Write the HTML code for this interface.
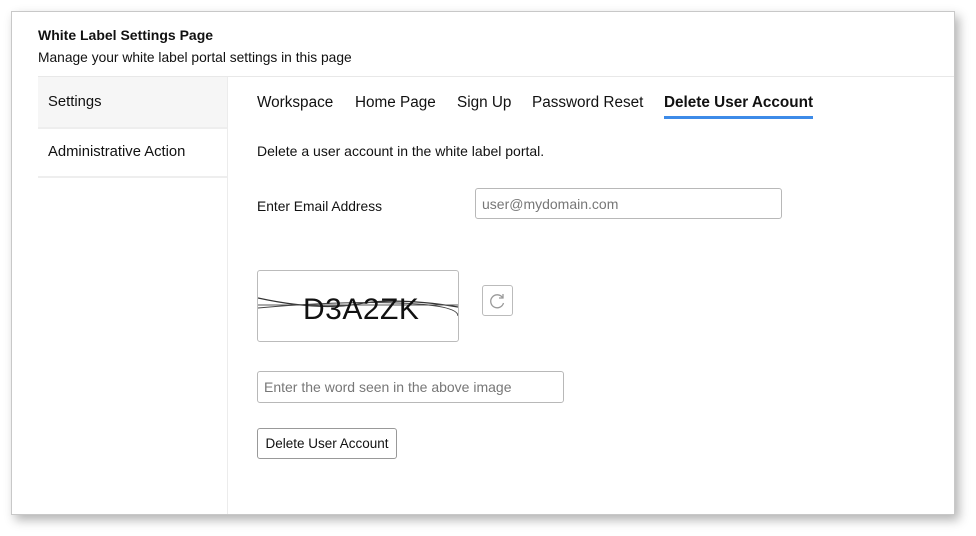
<!DOCTYPE html>
<html><head><style>
body{margin:0;width:976px;height:536px;background:#fff;font-family:"Liberation Sans",sans-serif;position:relative;overflow:hidden;color:#111}
.card{position:absolute;left:11px;top:11px;width:942px;height:502px;background:#fff;border:1px solid #c8c8c8;box-shadow:4px 5px 10px rgba(0,0,0,.3)}
.a{position:absolute;white-space:nowrap}
.in{position:absolute;border:1px solid #b8b8b8;border-radius:3px;background:#fff;font-size:14px;color:#777;box-sizing:border-box;padding-left:6px;display:flex;align-items:center}
</style></head><body>
<div class="card"></div>
<div class="a" style="left:38px;top:27px;font-size:14px;font-weight:bold">White Label Settings Page</div>
<div class="a" style="left:38px;top:50px;font-size:13.8px">Manage your white label portal settings in this page</div>
<div class="a" style="left:38px;top:76px;width:916px;height:1px;background:#e8e8e8"></div>
<div class="a" style="left:38px;top:77px;width:189px;height:50px;background:#f6f6f6"></div>
<div class="a" style="left:38px;top:127px;width:189px;height:2px;background:#eee"></div>
<div class="a" style="left:38px;top:176px;width:189px;height:2px;background:#eee"></div>
<div class="a" style="left:227px;top:77px;width:1px;height:437px;background:#ececec"></div>
<div class="a" style="left:48px;top:94px;font-size:14.8px">Settings</div>
<div class="a" style="left:48px;top:144px;font-size:14.8px">Administrative Action</div>
<div class="a" style="left:257px;top:94px;font-size:15.3px">Workspace</div>
<div class="a" style="left:355px;top:94px;font-size:15.3px">Home Page</div>
<div class="a" style="left:457px;top:94px;font-size:15.3px">Sign Up</div>
<div class="a" style="left:532px;top:94px;font-size:15.3px">Password Reset</div>
<div class="a" style="left:664px;top:94px;font-size:15.3px;font-weight:bold">Delete User Account</div>
<div class="a" style="left:664px;top:116px;width:149px;height:3px;background:#3d8be8"></div>
<div class="a" style="left:257px;top:143px;font-size:14px">Delete a user account in the white label portal.</div>
<div class="a" style="left:257px;top:199px;font-size:13.8px">Enter Email Address</div>
<div class="in" style="left:475px;top:188px;width:307px;height:31px">user@mydomain.com</div>
<div class="a" style="left:257px;top:270px;width:202px;height:72px;border:1px solid #bbb;border-radius:3px;box-sizing:border-box;overflow:hidden">
<svg width="200" height="70" style="position:absolute;left:0;top:0"><path d="M0 27 Q60 40 100 33 T200 36" stroke="#333" fill="none" stroke-width="1.3"/><path d="M0 34 L200 34" stroke="#555" stroke-width="1"/><path d="M0 37 Q80 30 140 32 T200 45" stroke="#444" fill="none" stroke-width="1"/></svg>
<div class="a" style="left:45px;top:22px;font-size:30px;letter-spacing:0.5px;color:#111">D3A2ZK</div></div>
<div class="a" style="left:482px;top:285px;width:31px;height:31px;border:1px solid #bbb;border-radius:3px;box-sizing:border-box">
<svg width="31" height="31" style="position:absolute;left:-1px;top:-1px"><path d="M20.5 12.5 A6.5 6.5 0 1 0 21.5 18" stroke="#999" fill="none" stroke-width="1.3"/><path d="M21 9 L21 13 L17 13" stroke="#999" fill="none" stroke-width="1.3"/></svg></div>
<div class="in" style="left:257px;top:371px;width:307px;height:32px">Enter the word seen in the above image</div>
<div class="a" style="left:257px;top:428px;width:140px;height:31px;border:1px solid #999;border-radius:3px;box-sizing:border-box;font-size:13.5px;text-align:center;line-height:29px">Delete User Account</div>
</body></html>
